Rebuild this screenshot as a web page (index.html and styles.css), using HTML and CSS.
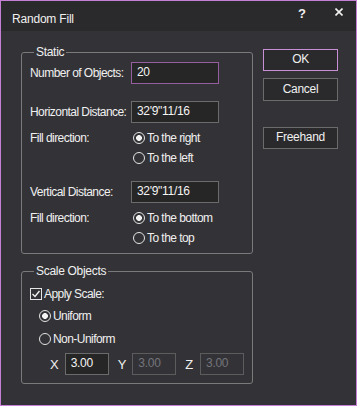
FILE: index.html
```html
<!DOCTYPE html>
<html lang="en">
<head>
    <meta charset="UTF-8">
    <meta name="viewport" content="width=device-width, initial-scale=1.0">
    <title>Random Fill</title>
    <link rel="stylesheet" href="styles.css">
</head>
<body>
    <div class="window">
        <div class="titlebar">
            <span class="title">Random Fill</span>
            <span class="help">?</span>
            <span class="close">
                <svg width="8" height="8" viewBox="0 0 8 8"><path d="M0.5 0.5 L7.5 7.5 M7.5 0.5 L0.5 7.5" stroke="#f2f2f2" stroke-width="1.6"/></svg>
            </span>
        </div>
        <div class="content">
            <div class="groups">
                <fieldset class="group static">
                    <legend>Static</legend>
                    <div class="field">
                        <label for="count">Number of Objects:</label>
                        <input type="text" id="count" class="focused" value="20">
                    </div>
                    <div class="field gap-big">
                        <label for="hdist">Horizontal Distance:</label>
                        <input type="text" id="hdist" value="32'9&quot;11/16">
                    </div>
                    <div class="field options">
                        <span class="label">Fill direction:</span>
                        <div class="radios">
                            <div class="radio"><span class="circle checked"></span>To the right</div>
                            <div class="radio"><span class="circle"></span>To the left</div>
                        </div>
                    </div>
                    <div class="field gap-mid">
                        <label for="vdist">Vertical Distance:</label>
                        <input type="text" id="vdist" value="32'9&quot;11/16">
                    </div>
                    <div class="field options">
                        <span class="label">Fill direction:</span>
                        <div class="radios">
                            <div class="radio"><span class="circle checked"></span>To the bottom</div>
                            <div class="radio"><span class="circle"></span>To the top</div>
                        </div>
                    </div>
                </fieldset>

                <fieldset class="group scale">
                    <legend>Scale Objects</legend>
                    <div class="check">
                        <span class="box">
                            <svg width="10" height="10" viewBox="0 0 10 10"><path d="M1.5 5 L4 7.5 L8.5 2" fill="none" stroke="#f2f2f2" stroke-width="1.4"/></svg>
                        </span>
                        Apply Scale:
                    </div>
                    <div class="radio sub"><span class="circle checked"></span>Uniform</div>
                    <div class="radio sub second"><span class="circle"></span>Non-Uniform</div>
                    <div class="xyz">
                        <span class="axis">X</span><input type="text" class="small" value="3.00">
                        <span class="axis">Y</span><input type="text" class="small" value="3.00" disabled>
                        <span class="axis">Z</span><input type="text" class="small" value="3.00" disabled>
                    </div>
                </fieldset>
            </div>

            <div class="buttons">
                <button class="default">OK</button>
                <button class="cancel">Cancel</button>
                <button class="freehand">Freehand</button>
            </div>
        </div>
    </div>
</body>
</html>
```

FILE: styles.css
```css
* {
    box-sizing: border-box;
}
html, body {
    margin: 0;
    background-color: #333337;
}
body {
    font-family: "Liberation Sans", Arial, sans-serif;
    font-size: 12px;
    color: #f0f0f0;
}
.window {
    width: 357px;
    height: 406px;
    border: 1px solid #c57fd5;
    background-color: #333337;
}

/* title bar */
.titlebar {
    height: 30px;
    background-color: #2a2a2c;
    display: flex;
    align-items: flex-start;
    padding: 11px 0 0 11px;
    line-height: 14px;
}
.title {
    letter-spacing: -0.2px;
}
.help {
    margin-left: auto;
    margin-top: -5px;
    font-weight: bold;
    font-size: 13px;
}
.close {
    margin: -4px 13px 0 29px;
    width: 8px;
    height: 8px;
    display: block;
}
.close svg {
    display: block;
}

/* body */
.content {
    display: flex;
    padding: 14px 0 0 20px;
}
.groups {
    width: 232px;
}
.group {
    margin: 0;
    padding: 3px 8px 5px 8px;
    border: 1px solid #7a7a7a;
    border-radius: 3px;
    min-width: 0;
}
.group legend {
    padding: 0 2px;
    margin-left: 4px;
    line-height: 14px;
    letter-spacing: -0.3px;
}
.scale {
    margin-top: 10px;
    padding: 6px 8px 8px 8px;
}

.field {
    display: grid;
    grid-template-columns: 101px 88px;
    align-items: center;
    height: 22px;
    letter-spacing: -0.55px;
}
.gap-big {
    margin-top: 17px;
}
.gap-mid {
    margin-top: 13px;
}
.options {
    height: 40px;
    margin-top: 5px;
    align-items: start;
}
.options .label {
    line-height: 20px;
}

input[type="text"] {
    height: 22px;
    width: 88px;
    background-color: #262626;
    color: #f4f4f4;
    border: 1px solid #6b6b6b;
    font-family: "Liberation Sans", Arial, sans-serif;
    font-size: 12px;
    padding: 0 0 2px 5px;
    letter-spacing: -0.3px;
    outline: none;
}
input.focused {
    border-color: #955e9f;
}
input:disabled {
    background-color: #333337;
    color: #74747a;
    border-color: #5c5c5c;
}

.radio {
    display: flex;
    align-items: center;
    height: 20px;
    padding-left: 2px;
    letter-spacing: -0.55px;
}
.circle {
    width: 12px;
    height: 12px;
    border: 1px solid #e4e4e4;
    border-radius: 50%;
    margin-right: 2px;
    flex: none;
}
.circle.checked {
    background: radial-gradient(circle, #f4f4f4 0 2.6px, transparent 3.2px);
}

.check {
    display: flex;
    align-items: center;
    height: 20px;
    letter-spacing: -0.55px;
}
.box {
    width: 12px;
    height: 12px;
    border: 1px solid #e4e4e4;
    margin-right: 2px;
    display: flex;
    align-items: center;
    justify-content: center;
}
.box svg {
    display: block;
}
.radio.sub {
    padding-left: 9px;
    margin-top: 2px;
}
.radio.sub.second {
    margin-top: 3px;
}

.xyz {
    display: flex;
    align-items: center;
    margin-top: 4px;
    padding-left: 20px;
}
.axis {
    width: 15px;
    font-size: 13px;
}
input.small {
    width: 44px;
    margin-right: 9px;
}
input.small:last-child {
    margin-right: 0;
}

/* buttons on the right */
.buttons {
    display: flex;
    flex-direction: column;
    margin-left: 10px;
    padding-top: 4px;
}
.buttons button {
    width: 75px;
    height: 22px;
    background-color: #2a2a2c;
    color: #f0f0f0;
    border: 1px solid #6b6b6b;
    font-family: "Liberation Sans", Arial, sans-serif;
    font-size: 12px;
    letter-spacing: -0.3px;
    padding: 0 0 2px 0;
}
.buttons button.default {
    border-color: #c98fd6;
}
.buttons button.cancel {
    margin-top: 7px;
    height: 23px;
}
.buttons button.freehand {
    margin-top: 26px;
}
```
